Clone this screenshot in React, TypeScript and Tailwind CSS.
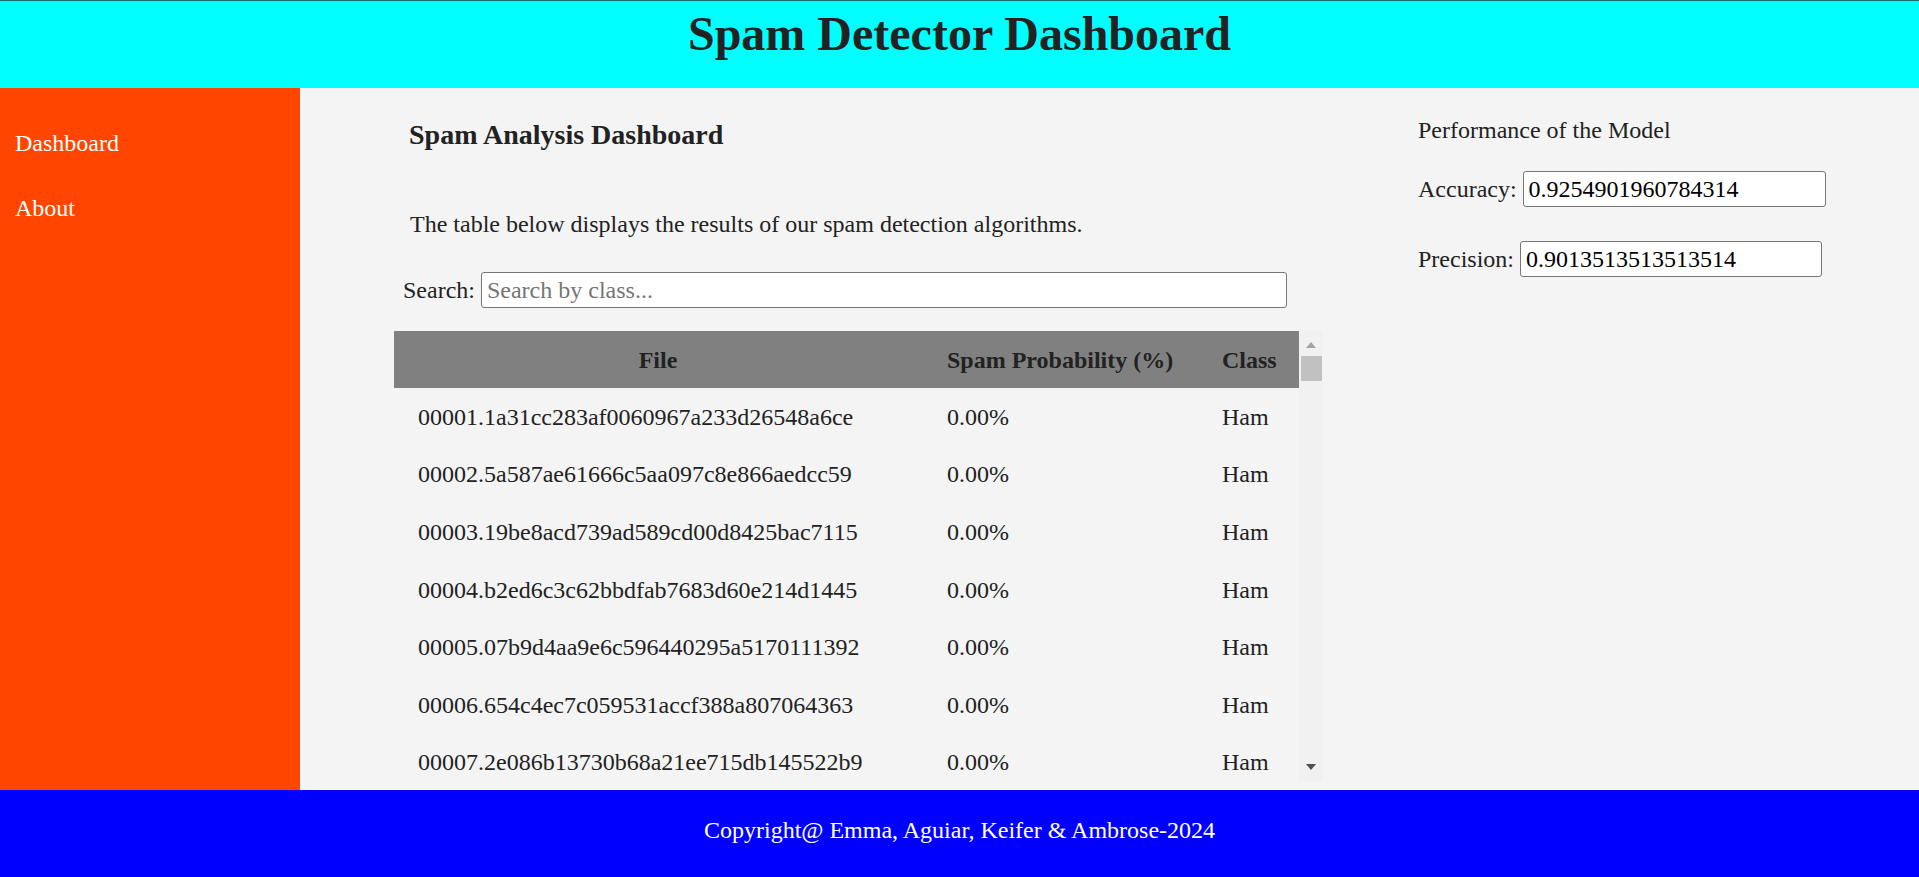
import React from 'react';

const rows = [
  '00001.1a31cc283af0060967a233d26548a6ce',
  '00002.5a587ae61666c5aa097c8e866aedcc59',
  '00003.19be8acd739ad589cd00d8425bac7115',
  '00004.b2ed6c3c62bbdfab7683d60e214d1445',
  '00005.07b9d4aa9e6c596440295a5170111392',
  '00006.654c4ec7c059531accf388a807064363',
  '00007.2e086b13730b68a21ee715db145522b9',
];

const font = { fontFamily: '"Liberation Serif", "Times New Roman", serif' };

const ScrollBar = () => (
  <div className="w-[24px] h-full bg-[#f1f1f1] flex flex-col items-center">
    <svg width="12" height="8" viewBox="0 0 12 8" className="mt-[10px]">
      <polygon points="6,1 11,7 1,7" fill="#a3a3a3" />
    </svg>
    <div className="w-[21px] h-[25px] bg-[#c1c1c1] mt-[7px] ml-[1px]" />
    <div className="flex-1" />
    <svg width="12" height="8" viewBox="0 0 12 8" className="mb-[10px]">
      <polygon points="1,1 11,1 6,7" fill="#505050" />
    </svg>
  </div>
);

export default function App() {
  return (
    <div className="w-full h-[877px] flex flex-col text-[#222]" style={font}>
      <header className="h-[88px] bg-[#00ffff] border-t border-[#16706f] pt-[5px]">
        <h1 className="text-[48px] font-bold leading-[55px] text-center">Spam Detector Dashboard</h1>
      </header>

      <div className="h-[702px] flex">
        <nav className="w-[300px] bg-[#ff4500] text-white text-[24px] leading-[28px] pl-[15px] flex flex-col">
          <a className="mt-[41px]">Dashboard</a>
          <a className="mt-[37px]">About</a>
        </nav>

        <main className="flex-1 bg-[#f4f4f4] flex">
          <section className="ml-[94px] w-[929px] flex flex-col">
            <h3 className="text-[28px] font-bold leading-[32px] mt-[31px] ml-[15px]">Spam Analysis Dashboard</h3>
            <p className="text-[24px] leading-[28px] mt-[59px] ml-[16px]">
              The table below displays the results of our spam detection algorithms.
            </p>
            <div className="flex items-center gap-[6px] mt-[34px] ml-[9px] h-[36px] text-[24px]">
              <label>Search:</label>
              <input
                className="w-[806px] h-[36px] bg-white border border-[#767676] rounded-[3px] px-[5px] text-[24px] placeholder:text-[#757575] outline-none"
                placeholder="Search by class..."
                style={font}
              />
            </div>

            <div className="mt-[23px] h-[450px] flex overflow-hidden">
              <div className="w-[905px] text-[24px] leading-[28px]">
                <div className="grid grid-cols-[528px_275px_102px] bg-[#808080] font-bold h-[57px] items-center whitespace-nowrap">
                  <div className="text-center">File</div>
                  <div className="pl-[25px]">Spam Probability (%)</div>
                  <div className="pl-[25px]">Class</div>
                </div>
                {rows.map((r) => (
                  <div key={r} className="grid grid-cols-[528px_275px_102px] h-[57.6px] items-center whitespace-nowrap">
                    <div className="pl-[24px]">{r}</div>
                    <div className="pl-[25px]">0.00%</div>
                    <div className="pl-[25px]">Ham</div>
                  </div>
                ))}
              </div>
              <ScrollBar />
            </div>
          </section>

          <aside className="ml-[95px] flex flex-col text-[24px]">
            <p className="leading-[28px] mt-[28px]">Performance of the Model</p>
            <div className="flex items-center gap-[6px] mt-[27px] h-[36px]">
              <label>Accuracy:</label>
              <input
                readOnly
                value="0.9254901960784314"
                className="w-[303px] h-[36px] bg-white border border-[#767676] rounded-[3px] px-[5px] text-[24px] text-black outline-none"
                style={font}
              />
            </div>
            <div className="flex items-center gap-[6px] mt-[34px] h-[36px]">
              <label>Precision:</label>
              <input
                readOnly
                value="0.9013513513513514"
                className="w-[302px] h-[36px] bg-white border border-[#767676] rounded-[3px] px-[5px] text-[24px] text-black outline-none"
                style={font}
              />
            </div>
          </aside>
        </main>
      </div>

      <footer className="h-[87px] bg-[#0000ff] text-white text-[24px] leading-[28px] flex items-center justify-center pb-[7px]">
        Copyright@ Emma, Aguiar, Keifer &amp; Ambrose-2024
      </footer>
    </div>
  );
}
